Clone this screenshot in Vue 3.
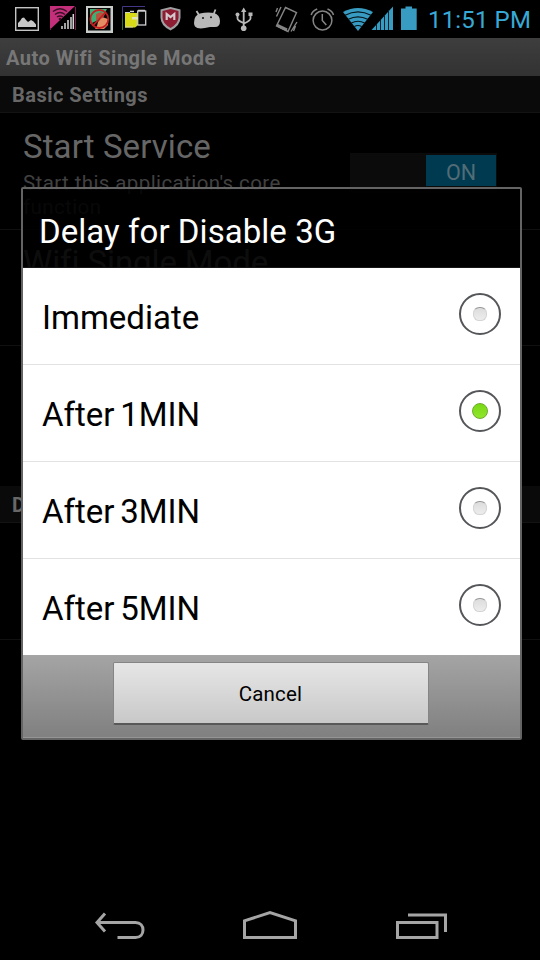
<script setup>
import { ref } from 'vue'

const options = ['Immediate', 'After 1MIN', 'After 3MIN', 'After 5MIN']
const selected = ref(1)
</script>

<template>
  <div class="screen">
    <header class="status">
      <svg width="45" height="38" viewBox="0 0 45 38">
        <rect x="15.7" y="7.7" width="22.6" height="22.6" fill="none" stroke="#c4c4c4" stroke-width="1.4" />
        <path d="M18 27V23l2-2 2-3 2-.5 2 2.500 2 2 3-2 2.500 1.500 2.500 3V27z" fill="#c8c8c8" />
      </svg>
      <svg width="36" height="38" viewBox="45 0 36 38">
        <path d="M50 6h25L50 29.500z" fill="#c32f7a" />
        <path d="M75.500 7v23M50.500 28v2" stroke="#7b1c4c" stroke-width="1" />
        <g fill="none" stroke="#3a1027" stroke-width="1.400">
          <path d="M53 11.500q7-5.500 14 0M55 14.500q5-4 10 0M57 17q3-2 6 0" />
        </g>
        <circle cx="60" cy="19" r="1.300" fill="#3a1027" />
        <path d="M62 29v-3M65 29v-6M68 29v-9M71 29v-12M73.300 29v-15" stroke="#d5d5d5" stroke-width="1.500" />
      </svg>
      <svg width="36" height="38" viewBox="81 0 36 38">
        <rect x="86" y="6" width="27" height="27" fill="#c9cdca" />
        <rect x="88" y="8" width="22.500" height="22.500" fill="#080808" />
        <path d="M90 9h17l-5 9-12 6z" fill="#3fae75" />
        <path d="M98 22l4-5 6 2v6l-4 4h-9l2-3z" fill="#e68e63" />
        <path d="M96 14l5-2 4 2-2 4-7 2z" fill="#b4533e" />
        <circle cx="99.300" cy="19" r="9" fill="none" stroke="#c51f22" stroke-width="1.800" />
        <path d="M105.500 12.500l-12.500 13" stroke="#c51f22" stroke-width="1.800" />
      </svg>
      <svg width="36" height="38" viewBox="117 0 36 38">
        <path d="M122.500 30V6.500H145" fill="none" stroke="#443787" stroke-width="1" />
        <path d="M122.500 19v11" stroke="#337025" stroke-width="1" />
        <rect x="137.700" y="11" width="8" height="14" fill="#080808" stroke="#d0d0d0" stroke-width="1.300" />
        <path d="M138 10.500h7M130 11.500h4" stroke="#d0d0d0" stroke-width="1.300" />
        <path d="M125 13h12v13l-2 1.500h-10z" fill="#d8da17" />
        <path d="M125 12.500h5M125 27h8" stroke="#d0d0c0" stroke-width="1" />
        <path d="M132 17h6v2.500h-6z" fill="#e2e2ba" />
      </svg>
      <svg width="35" height="38" viewBox="153 0 35 38">
        <path d="M170.500 7l10 2.500v8q0 8-10 13-10-5-10-13v-8z" fill="#a0a0a3" />
        <path d="M170.500 9l8 2v6.500q0 6-8 10.500-8-4.500-8-10.500V11z" fill="#8d1d32" />
        <path d="M166.700 20v-6l3.800 3 3.800-3v6" fill="none" stroke="#d4c9cc" stroke-width="2.200" />
      </svg>
      <svg width="40" height="38" viewBox="188 0 40 38">
        <path d="M196.500 11l2.500 4M215.500 9.500l-2 5" stroke="#b9b9b9" stroke-width="1.800" />
        <path d="M194 23q0-8 6-9.500 7-1.500 14-.5 6 2 6 8 0 6-5 6-3 0-5 0-12 3-15-.5-1-2-1-3.500z" fill="#b9b9b9" />
        <circle cx="203" cy="18" r="1" fill="#111" /><circle cx="211" cy="17.300" r="1" fill="#111" />
      </svg>
      <svg width="36" height="38" viewBox="228 0 36 38">
        <path d="M243.700 10v18M237.500 14v4.500q0 2 6 4.500M250.500 14v4.500q0 2-6.500 5" fill="none" stroke="#b9b9b9" stroke-width="1.800" />
        <path d="M241 12l2.700-4.500 2.700 4.500z" fill="#b9b9b9" />
        <circle cx="237.500" cy="14.500" r="2" fill="#b9b9b9" /><path d="M248.500 12.500h4v3.500h-4z" fill="#b9b9b9" />
        <circle cx="243.700" cy="28.300" r="2.800" fill="#b9b9b9" />
      </svg>
      <svg width="40" height="38" viewBox="264 0 40 38">
        <g fill="none" stroke="#858585" stroke-width="1.400">
          <path d="M285.500 7.500l11 5-8.500 19-11.500-5.500z" />
          <path d="M281 7l-4.500 9.500M277.500 8l-1.500 4M297 22l-6 9.500M295.500 26l-2 5" />
        </g>
        <path d="M277 23.500l10.500 5-1 3-10-5z" fill="#858585" />
      </svg>
      <svg width="35" height="38" viewBox="304 0 35 38">
        <g fill="none" stroke="#858585" stroke-width="1.500">
          <circle cx="322.500" cy="20.500" r="9.400" />
          <path d="M322.300 14v6.500l4 4.500M311.200 15q1-4 6-6M333.500 15q-1-4-6-6" />
        </g>
      </svg>
      <svg width="32" height="38" viewBox="339 0 32 38">
        <path d="M343 12q15-8 30 0l-15 19z" fill="#389cc2" />
        <g fill="none" stroke="#06151c" stroke-width="1.200">
          <path d="M345 15.300q13-7 26 0M348.300 19.300q9.700-5 19.400 0M351.300 23q6.700-3.500 13.400 0M354.300 26.500q3.700-2 7.400 0" />
        </g>
      </svg>
      <svg width="26" height="38" viewBox="371 0 26 38">
        <path d="M371.500 30L393 6.500V30z" fill="#389cc2" />
        <path d="M376.500 24v6M380.500 20v10M384.500 15v15M388.500 10v20" stroke="#08202a" stroke-width="1" />
      </svg>
      <svg width="28" height="38" viewBox="397 0 28 38">
        <path d="M401 8.500h4.500v-2h6.500v2h4.700V30H401z" fill="#389cc2" />
      </svg>
      <span class="clock">11:51 PM</span>
    </header>

    <main class="page">
      <h1 class="appbar"><span>Auto Wifi Single Mode</span></h1>
      <h2 class="category"><span>Basic Settings</span></h2>
      <section class="pref first">
        <div class="info">
          <div class="name">Start Service</div>
          <div class="summary">Start this application's core<br />function</div>
        </div>
        <div class="switch"><span class="thumb">ON</span></div>
      </section>
      <section class="pref second"><div class="name wide">Wifi Single Mode</div></section>
      <section class="pref third"></section>
      <h2 class="category"><span>D</span></h2>
      <section class="pref fourth"></section>
    </main>

    <nav class="navbar">
      <svg width="540" height="70" viewBox="0 890 540 70" fill="none" stroke="#a5a5a5" stroke-width="3">
        <path d="M105 913.500L97 922.500l8 9M97 922.500h38.500c10 0 10 15 0 15H117.500" />
        <path d="M244.500 937.500v-16.700L270 912.500l25.500 8.300v16.700z" />
        <path d="M397.500 922.500h39.500v15h-39.500zM408 915h37.500v17" />
      </svg>
    </nav>

    <div class="dialog" role="dialog">
      <div class="title"><span>Delay for Disable 3G</span></div>
      <ul class="options">
        <li v-for="(option, i) in options" :key="option" @click="selected = i">
          <span class="label">{{ option }}</span>
          <span class="radio" :class="{ on: selected === i }"><i></i></span>
        </li>
      </ul>
      <div class="footer"><button class="cancel"><span>Cancel</span></button></div>
    </div>
  </div>
</template>

<style>
body { background: #000; overflow: hidden; }
</style>

<style scoped>
* { box-sizing: border-box; }
.screen { position: relative; width: 540px; height: 960px; background: #000; overflow: hidden; font-family: Roboto, sans-serif; display: flex; flex-direction: column; }
.status { height: 38px; display: flex; flex: none; }
.status svg { flex: none; overflow: visible; display: block; }
.clock { padding-left: 3px; color: #38a9d6; font-size: 24px; line-height: 40px; letter-spacing: 0.15px; white-space: nowrap; }
.page { flex: 1; }
.appbar, .category { margin: 0; font-size: 20px; font-weight: 700; letter-spacing: 0.48px; white-space: nowrap; }
.appbar { height: 38px; padding-left: 6px; line-height: 40px; color: #777; background: linear-gradient(#3e3e3e, #323232); }
.category { height: 37px; padding-left: 12px; line-height: 38px; color: #686868; background: #0a0a0a; border-bottom: 1px solid #131313; }
.pref { display: flex; border-bottom: 1px solid #101010; padding-left: 23px; white-space: nowrap; }
.first { height: 117px; }
.second { height: 116px; }
.third { height: 140px; border-bottom: 0; }
.fourth { height: 117px; }
.info { width: 327px; padding-top: 13px; }
.name { font-size: 33px; line-height: 42px; letter-spacing: 0.1px; color: #666; }
.wide { padding-top: 12px; letter-spacing: -0.1px; }
.summary { font-size: 20.500px; line-height: 24px; padding-top: 3px; letter-spacing: 0.4px; color: #414141; }
.switch { width: 147px; height: 40px; margin-top: 40px; padding: 2px 1px 0 0; background: #0b0b0b; display: flex; justify-content: flex-end; }
.thumb { width: 70px; height: 31px; background: #003a50; color: #526c76; font-size: 21.500px; line-height: 36px; text-align: center; }
.navbar { height: 70px; flex: none; }
.navbar svg { display: block; }
.dialog { position: absolute; left: 21px; top: 187px; width: 501px; height: 553px; border: 2px solid #646464; border-radius: 2px; display: flex; flex-direction: column; white-space: nowrap; }
.title { height: 79px; padding-left: 16px; line-height: 86px; font-size: 33px; letter-spacing: 0.05px; color: #fff; background: rgba(0, 0, 0, 0.87); border-bottom: 1px solid #171717; }
.options { margin: 0; padding: 0; list-style: none; background: #fff; }
.options li { height: 97px; padding: 0 19px 0 19px; display: flex; justify-content: space-between; border-bottom: 1px solid #e2e2e2; }
.options li:last-child { height: 96px; border-bottom: 0; }
.label { font-size: 33px; line-height: 99px; word-spacing: -2.500px; color: #000; }
.radio { width: 42px; height: 42px; margin-top: 25px; border: 2px solid #555659; border-radius: 50%; display: flex; align-items: center; justify-content: center; }
.radio i { width: 14px; height: 14px; border-radius: 45%; border: 1px solid #d4d4d4; border-top-color: #999; background: linear-gradient(#dcdcdc, #ededed); }
.radio.on i { width: 16px; height: 16px; border-radius: 50%; border: 1px solid #6dab2a; background: linear-gradient(#78d914, #92e62c); }
.footer { flex: 1; display: flex; justify-content: center; align-items: flex-start; padding: 6px 1px 0 0; border-top: 1px solid #a5a5a5; border-bottom: 1px solid #959595; background: linear-gradient(#a4a4a4, #808080); }
.cancel { width: 316px; height: 63px; padding: 1px 0 0; border: 1px solid #858585; border-bottom: 2px solid #585858; border-radius: 2px; color: #000; background: linear-gradient(#e6e6e6, #c8c8c8); font: 20.500px Roboto, sans-serif; letter-spacing: 0.2px; }
.cancel span { margin-right: 1px; }
</style>
